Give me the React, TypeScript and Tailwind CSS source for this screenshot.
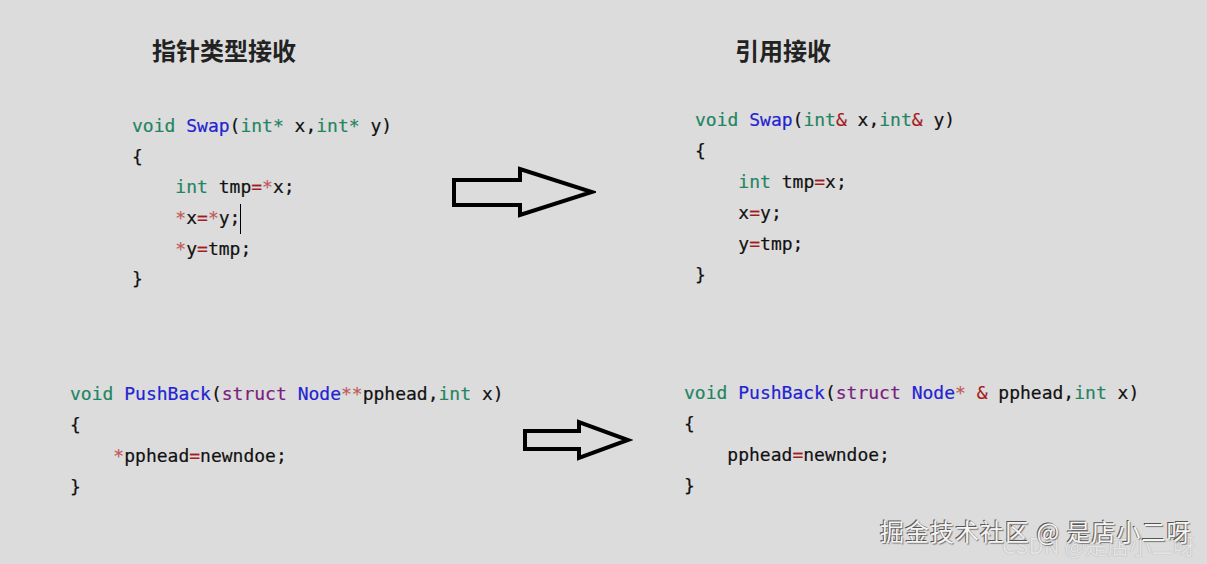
import React from "react";

const G = "text-[#1f8562]";
const B = "text-[#2323d2]";
const P = "text-[#7a1d80]";
const R = "text-[#a31c1c]";
const S = "text-[#c05a5a]";
const K = "text-[#111111]";

type Tok = [string, string];

function Line({ toks, indent = false, lh }: { toks: Tok[]; indent?: boolean; lh: string }) {
  return (
    <div className={`${lh} whitespace-pre ${K}`}>
      {indent ? "    " : ""}
      {toks.map((t, i) =>
        t[0] === "|" ? (
          <span key={i} className="inline-block w-px h-[30px] bg-black align-middle" />
        ) : (
          <span key={i} className={t[1]}>
            {t[0]}
          </span>
        )
      )}
    </div>
  );
}

function Arrow({ w, h, points }: { w: number; h: number; points: string }) {
  return (
    <svg width={w} height={h} viewBox={`0 0 ${w} ${h}`} className="shrink-0">
      <polygon points={points} fill="none" stroke="#000" strokeWidth="4" strokeLinejoin="miter" />
    </svg>
  );
}

const mono = "font-['DejaVu_Sans_Mono',monospace] text-[18px] [-webkit-text-stroke:0.2px_currentColor]";
const title = "font-['Noto_Sans_CJK_SC',sans-serif] font-bold text-[24px] leading-[28px] text-[#222]";

export default function App() {
  return (
    <div className="w-[1207px] h-[564px] bg-[#dcdcdc] relative overflow-hidden flex flex-col">
      {/* top */}
      <div className="flex h-[370px] shrink-0">
        <div className="w-[450px] shrink-0">
          <div className={`${title} pl-[152px] pt-[36px]`}>指针类型接收</div>
          <div className={`${mono} pl-[132px] mt-[47px]`}>
            <Line lh="leading-[30.6px]" toks={[["void", G], [" ", K], ["Swap", B], ["(", K], ["int", G], ["*", G], [" x,", K], ["int", G], ["*", G], [" y)", K]]} />
            <Line lh="leading-[30.6px]" toks={[["{", K]]} />
            <Line lh="leading-[30.6px]" indent toks={[["int", G], [" tmp", K], ["=", R], ["*", S], ["x;", K]]} />
            <Line lh="leading-[30.6px]" indent toks={[["*", S], ["x", K], ["=", R], ["*", S], ["y;", K], ["|", ""]]} />
            <Line lh="leading-[30.6px]" indent toks={[["*", S], ["y", K], ["=", R], ["tmp;", K]]} />
            <Line lh="leading-[30.6px]" toks={[["}", K]]} />
          </div>
        </div>
        <div className="mt-[166px]">
          <Arrow w={146} h={52} points="4,14 70,14 70,3 142,26 70,49 70,39 4,39" />
        </div>
        <div className="flex-1">
          <div className={`${title} pl-[139px] pt-[36px]`}>引用接收</div>
          <div className={`${mono} pl-[99px] mt-[40px]`}>
            <Line lh="leading-[31px]" toks={[["void", G], [" ", K], ["Swap", B], ["(", K], ["int", G], ["&", R], [" x,", K], ["int", G], ["&", R], [" y)", K]]} />
            <Line lh="leading-[31px]" toks={[["{", K]]} />
            <Line lh="leading-[31px]" indent toks={[["int", G], [" tmp", K], ["=", R], ["x;", K]]} />
            <Line lh="leading-[31px]" indent toks={[["x", K], ["=", R], ["y;", K]]} />
            <Line lh="leading-[31px]" indent toks={[["y", K], ["=", R], ["tmp;", K]]} />
            <Line lh="leading-[31px]" toks={[["}", K]]} />
          </div>
        </div>
      </div>
      {/* bottom */}
      <div className="flex">
        <div className={`w-[521px] shrink-0 ${mono} pl-[70px] pt-[8px]`}>
          <Line lh="leading-[31px]" toks={[["void", G], [" ", K], ["PushBack", B], ["(", K], ["struct", P], [" ", K], ["Node", B], ["**", S], ["pphead,", K], ["int", G], [" x)", K]]} />
          <Line lh="leading-[31px]" toks={[["{", K]]} />
          <Line lh="leading-[31px]" indent toks={[["*", S], ["pphead", K], ["=", R], ["newndoe;", K]]} />
          <Line lh="leading-[31px]" toks={[["}", K]]} />
        </div>
        <div className="mt-[48px]">
          <Arrow w={112} h={44} points="4,13 58,13 58,4 107,22 58,40 58,31 4,31" />
        </div>
        <div className={`flex-1 ${mono} pl-[51px] pt-[7px]`}>
          <Line lh="leading-[31px]" toks={[["void", G], [" ", K], ["PushBack", B], ["(", K], ["struct", P], [" ", K], ["Node", B], ["*", S], [" ", K], ["&", R], [" pphead,", K], ["int", G], [" x)", K]]} />
          <Line lh="leading-[31px]" toks={[["{", K]]} />
          <Line lh="leading-[31px]" indent toks={[["pphead", K], ["=", R], ["newndoe;", K]]} />
          <Line lh="leading-[31px]" toks={[["}", K]]} />
        </div>
      </div>
      {/* watermarks */}
      <div className="absolute left-[1002px] top-[530px] font-['Noto_Sans_CJK_SC',sans-serif] text-[22px] leading-[28px] text-[#e8e8e8] opacity-80 [text-shadow:0_0_1px_#888] whitespace-pre">
        CSDN @是店小二呀
      </div>
      <div className="absolute left-[880px] top-[516px] font-['Noto_Sans_CJK_SC',sans-serif] text-[24px] leading-[30px] tracking-[1px] text-[#f4f4f4] [text-shadow:-1px_-1px_0_#555,1px_1px_1px_#777] whitespace-pre">
        掘金技术社区 @ 是店小二呀
      </div>
    </div>
  );
}
